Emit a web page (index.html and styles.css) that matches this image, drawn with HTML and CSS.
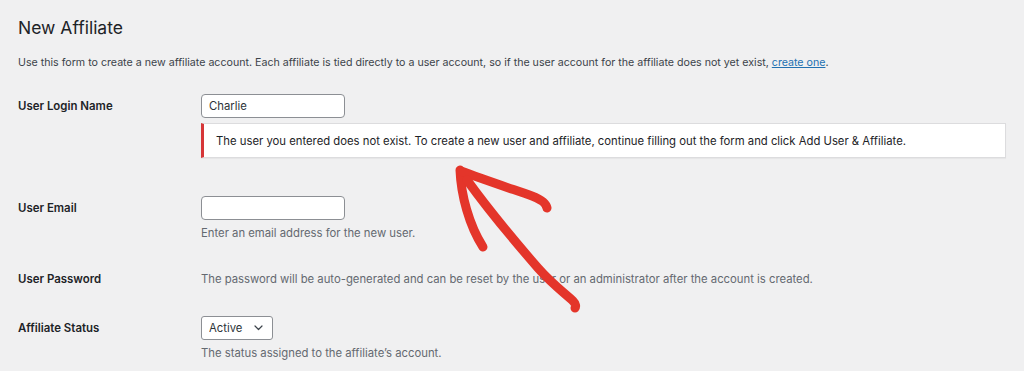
FILE: index.html
```html
<!DOCTYPE html>
<html lang="en">
<head>
<meta charset="utf-8">
<title>New Affiliate</title>
<link rel="stylesheet" href="styles.css">
</head>
<body>
<div class="wrap">
  <h1 class="title">New Affiliate</h1>
  <p class="intro">Use this form to create a new affiliate account. Each affiliate is tied directly to a user account, so if the user account for the affiliate does not yet exist, <a href="#" class="link">create one</a>.</p>

  <div class="form">
    <div class="row row-login">
      <div class="label label-field">User Login Name</div>
      <div class="field">
        <input class="text-input" type="text" value="Charlie">
        <div class="notice">The user you entered does not exist. To create a new user and affiliate, continue filling out the form and click Add User &amp; Affiliate.</div>
      </div>
    </div>

    <div class="row row-email">
      <div class="label label-field">User Email</div>
      <div class="field">
        <input class="text-input" type="text" value="">
        <p class="desc">Enter an email address for the new user.</p>
      </div>
    </div>

    <div class="row row-pass">
      <div class="label">User Password</div>
      <div class="field">
        <p class="desc desc-inline">The password will be auto-generated and can be reset by the user or an administrator after the account is created.</p>
      </div>
    </div>

    <div class="row row-status">
      <div class="label label-field">Affiliate Status</div>
      <div class="field">
        <div class="select-wrap">
          <select class="select"><option>Active</option></select>
          <svg class="chevron" width="9" height="6" viewBox="0 0 9 6"><path d="M1 1 L4.5 4.5 L8 1" fill="none" stroke="#3c434a" stroke-width="1.2" stroke-linecap="round" stroke-linejoin="round"/></svg>
        </div>
        <p class="desc">The status assigned to the affiliate’s account.</p>
      </div>
    </div>
  </div>
</div>

<svg class="arrow" width="170" height="180" viewBox="0 0 170 180">
  <g fill="none" stroke="#e4352a" stroke-linecap="round" stroke-linejoin="round">
    <path d="M20 20 C21 45 29 75 43 97" stroke-width="9"/>
    <path d="M21 21 C45 30 72 39 92 46 C100 49 106 53 107 58" stroke-width="9"/>
    <path d="M27 30 C50 62 78 95 98 118 C112 134 128 146 133 151 C136 154 136 157 135 158" stroke-width="9"/>
  </g>
</svg>
</body>
</html>
```

FILE: styles.css
```css
html, body {
  margin: 0;
  padding: 0;
  background: #f0f0f1;
}

body {
  font-family: "Inter", "Liberation Sans", sans-serif;
  font-size: 11.3px;
  color: #1d2327;
  width: 1024px;
  height: 371px;
  overflow: hidden;
  position: relative;
}

.wrap {
  padding: 16px 18px 0 18px;
}

.title {
  margin: 0;
  font-size: 17.5px;
  font-weight: 400;
  line-height: 24px;
  color: #1d2327;
}

.intro {
  margin: 15px 0 0 0;
  font-size: 10.65px;
  line-height: 16px;
  color: #3c434a;
}

.link {
  color: #2271b1;
  text-decoration: underline;
}

.form {
  display: flex;
  flex-direction: column;
}

.row {
  display: grid;
  grid-template-columns: 183px 1fr;
  align-items: start;
}

.row-login { margin-top: 23px; }
.row-email { margin-top: 38px; }
.row-pass { margin-top: 30px; }
.row-status { margin-top: 29px; }

.label {
  font-size: 11.45px;
  font-weight: 600;
  line-height: 16px;
  color: #1d2327;
}

.label-field {
  line-height: 24px;
}

.field {
  display: flex;
  flex-direction: column;
  align-items: flex-start;
}

.text-input {
  box-sizing: border-box;
  width: 144px;
  height: 24px;
  margin: 0;
  padding: 0 7px;
  border: 1px solid #8c8f94;
  border-radius: 4px;
  background: #fff;
  font: inherit;
  color: #2c3338;
}

.notice {
  box-sizing: border-box;
  align-self: stretch;
  margin: 5px 0 0 0;
  height: 35px;
  display: flex;
  align-items: center;
  padding: 0 12px;
  background: #fff;
  border: 1px solid #dcdcde;
  border-left: 3px solid #d63638;
  box-shadow: 0 1px 1px rgba(0, 0, 0, 0.04);
  color: #1d2327;
}

.desc {
  margin: 5px 0 0 0;
  line-height: 16px;
  color: #646970;
}

.desc-inline {
  margin: 0;
}

.select-wrap {
  position: relative;
  width: 72px;
  height: 24px;
}

.select {
  box-sizing: border-box;
  width: 72px;
  height: 24px;
  margin: 0;
  padding: 0 20px 0 7px;
  border: 1px solid #8c8f94;
  border-radius: 3px;
  background: #fff;
  font: inherit;
  color: #2c3338;
  -webkit-appearance: none;
  appearance: none;
}

.chevron {
  position: absolute;
  right: 10px;
  top: 9px;
  pointer-events: none;
}

.arrow {
  position: absolute;
  left: 440px;
  top: 150px;
}
```
